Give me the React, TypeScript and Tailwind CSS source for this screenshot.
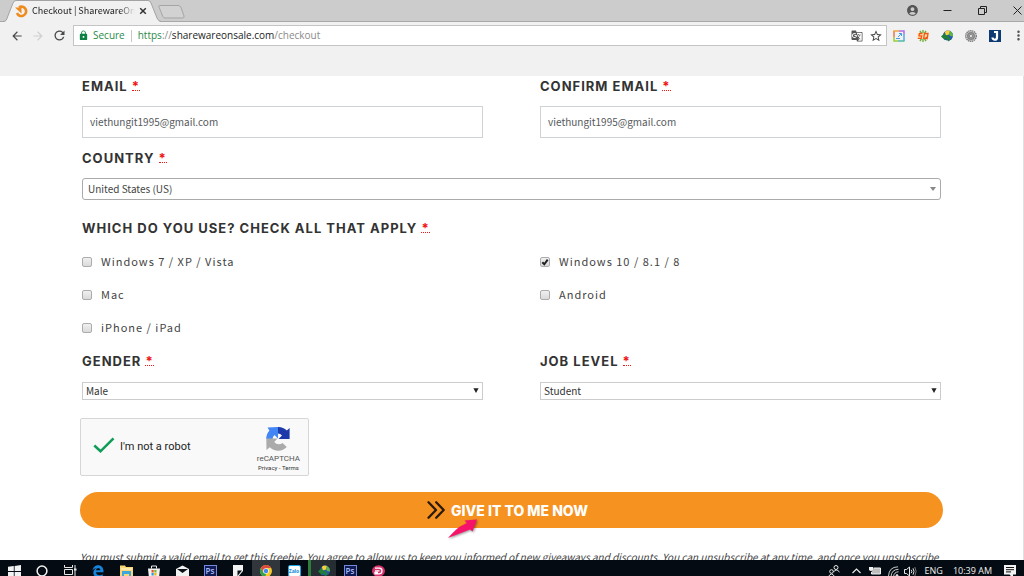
import type { ReactNode } from "react";
import {
  MdAccountCircle,
  MdArrowBack,
  MdArrowForward,
  MdGTranslate,
  MdLock,
  MdMoreVert,
  MdRefresh,
  MdStarBorder,
} from "react-icons/md";

const UI_FONT = "font-['Open_Sans',sans-serif]";
const BODY_FONT = "font-['Noto_Sans_CJK_SC','Noto_Sans',sans-serif]";

/* ---------- browser window ---------- */

function TabStrip() {
  return (
    <div className="relative flex h-[22px] shrink-0 border-b border-[#a8a8a8] bg-[#cccccc]">
      <div className="relative flex h-[22px] w-[168px] items-center pr-[21px] pl-[15px]">
        <svg className="absolute top-0 left-0" width="168" height="22" viewBox="0 0 168 22" aria-hidden="true">
          <path d="M3 22 C6 21.5 6.500 20 7.500 17 L13 3 Q14 .5 16 .5 H148 Q150 .5 151 3 L157 18 Q158.500 21.500 161 22 Z" fill="#f1f1f1" />
          <path d="M3 21.500 C6 21.500 6.500 20 7.500 17 L13 3 Q14 .5 16 .5 H148 Q150 .5 151 3 L157 18 Q158.500 21.500 161 21.500" fill="none" stroke="#a3a3a3" />
        </svg>
        <svg className="relative shrink-0" width="13" height="13" viewBox="0 0 13 13" aria-hidden="true">
          <path d="M4 2.300 A4.700 4.700 0 1 1 2 8" fill="none" stroke="#ef8a1d" strokeWidth="2.600" />
          <path d="M0 2.500 H6.500 V8.500 Z" fill="#ef8a1d" />
        </svg>
        <span className={`${BODY_FONT} relative ml-1 flex-1 overflow-hidden text-[9px] leading-4 whitespace-nowrap text-[#222] [mask-image:linear-gradient(to_right,black_85%,transparent)]`}>
          Checkout | SharewareOnS
        </span>
        <button type="button" aria-label="Close tab" className="relative ml-1 shrink-0">
          <svg width="8" height="8" viewBox="0 0 8 8" aria-hidden="true">
            <path d="M1.200 1.200 L6.800 6.800 M6.800 1.200 L1.200 6.800" stroke="#333" strokeWidth="1.500" />
          </svg>
        </button>
      </div>
      <button type="button" aria-label="New tab" className="-ml-3 self-center pt-0.5">
        <svg width="30" height="14" viewBox="0 0 30 14" aria-hidden="true">
          <path d="M3.500 .5 H22 Q24 .5 24.800 2 L28 11 Q28.600 13 26.500 13 H9 Q7.500 13 6.800 11.500 L3 2 Q2.500 .5 3.500 .5 Z" fill="#d2d2d2" stroke="#a5a5a5" />
        </svg>
      </button>
      <div className="ml-auto flex items-center pr-0.5 text-[#333]">
        <button type="button" aria-label="Profile" className="flex w-[35px] justify-center text-[#555]">
          <MdAccountCircle size={13} />
        </button>
        <button type="button" aria-label="Minimize" className="flex w-[35px] justify-center">
          <svg width="9" height="9" viewBox="0 0 9 9"><path d="M.5 4.500 H8.500" stroke="#222" /></svg>
        </button>
        <button type="button" aria-label="Restore" className="flex w-[35px] justify-center">
          <svg width="9" height="9" viewBox="0 0 9 9" fill="none" stroke="#222">
            <path d="M.5 2.500 H6.500 V8.500 H.5 Z M2.500 2.500 V.5 H8.500 V6.500 H6.500" />
          </svg>
        </button>
        <button type="button" aria-label="Close" className="flex w-[22px] justify-end">
          <svg width="9" height="9" viewBox="0 0 9 9"><path d="M.5 .5 L8.500 8.500 M8.500 .5 L.5 8.500" stroke="#222" /></svg>
        </button>
      </div>
    </div>
  );
}

function IdmGlobe() {
  return (
    <svg width="12" height="12" viewBox="0 0 12 12" aria-hidden="true">
      <circle cx="7" cy="5.600" r="5" fill="#2457b0" />
      <path d="M3.800 2 Q6 -.2 9 1 L8 4.500 L5 5.500 Z" fill="#f6cf3a" />
      <path d="M9 1 Q12.500 3 12 6.500 L9 6 L8 4 Z" fill="#5fb548" />
      <path d="M0 6.500 L4 2.800 V5 Q8.500 5.500 9.500 9.500 L7.500 11.500 Q6.500 8.500 4 8.200 V10.200 Z" fill="#1f7f38" />
    </svg>
  );
}

function Extensions() {
  return (
    <div className="flex items-center gap-3">
      <button type="button" aria-label="Screenshot extension">
        <svg width="12" height="12" viewBox="0 0 12 12" fill="none" strokeWidth="1.500">
          <path d="M1 7 V1" stroke="#e8744f" />
          <path d="M.3 1 H6" stroke="#f0a53c" />
          <path d="M6 1 H11 V4" stroke="#b36be0" />
          <path d="M11 4 V11" stroke="#56a7e8" />
          <path d="M11.500 11 H5" stroke="#4cb8a4" />
          <path d="M5 11 H1 V7" stroke="#9ccc3c" />
          <path d="M3 8.500 H7 M5 7 L8.500 3.500 M6 3.500 H8.500 V6" stroke="#4a9be0" strokeWidth="1" />
        </svg>
      </button>
      <button type="button" aria-label="SQ extension">
        <svg width="12" height="12" viewBox="0 0 12 12" fill="none">
          <path d="M6 0 V12 M3 .8 L9 11.200 M9 .8 L3 11.200" stroke="#6fae3a" strokeWidth="1.400" />
          <path d="M.5 3 H11.500 V9 H.5 Z" fill="#ffe0a8" />
          <path d="M5.500 3.500 H2.500 L2 5.800 H4.700 L4.200 8.300 H.8 M7.500 3.500 H11 L10.200 8.300 H6.700 Z M8.800 7 L10.500 9.300" stroke="#f0581a" strokeWidth="1.300" />
        </svg>
      </button>
      <button type="button" aria-label="IDM extension"><IdmGlobe /></button>
      <button type="button" aria-label="Settings extension">
        <svg width="12" height="12" viewBox="0 0 13 13" fill="none">
          <circle cx="6.500" cy="6.500" r="5.700" stroke="#777" strokeWidth="1.500" strokeDasharray="1.500 .6" />
          <circle cx="6.500" cy="6.500" r="4.800" fill="#a5a5a5" />
          <circle cx="6.500" cy="6.500" r="3.600" stroke="#6d6d6d" strokeWidth=".8" />
          <circle cx="6.500" cy="6.500" r="1.800" fill="#ddd" stroke="#777" strokeWidth=".8" />
        </svg>
      </button>
      <button type="button" aria-label="J extension">
        <svg width="12" height="12" viewBox="0 0 12 12" fill="none">
          <rect width="12" height="12" fill="#0d3a73" />
          <path d="M5 2 H8 V7.500 A2.200 2.200 0 0 1 3.500 7.500" stroke="#fff" strokeWidth="2.200" />
        </svg>
      </button>
    </div>
  );
}

function Toolbar() {
  return (
    <div className={`${UI_FONT} flex h-[54px] shrink-0 items-start bg-[#f1f1f1] pt-[3px] text-[10px]`}>
      <div className="flex h-[21px] items-center gap-[7px] pr-1.5 pl-2.5">
        <button type="button" aria-label="Back" className="text-[#4a4a4a]"><MdArrowBack size={14} /></button>
        <button type="button" aria-label="Forward" className="text-[#d0d0d0]"><MdArrowForward size={14} /></button>
        <button type="button" aria-label="Reload" className="text-[#4a4a4a]"><MdRefresh size={15} /></button>
      </div>
      <div className="flex h-[21px] flex-1 items-center border border-[#c4c4c4] bg-white pr-[3px] pl-1">
        <MdLock size={11} className="text-[#0b8043]" />
        <span className="ml-1 text-[#2a8a4a]">Secure</span>
        <span className="mx-1.5 h-3 w-px bg-[#c8c8c8]" />
        <a href="https://sharewareonsale.com/checkout" className="flex-1 text-[#8a8a8a]">
          <span className="text-[#2a8a4a]">https</span>://<span className="text-[#222]">sharewareonsale.com</span>/checkout
        </a>
        <button type="button" aria-label="Translate this page" className="text-[#555]"><MdGTranslate size={12} /></button>
        <button type="button" aria-label="Bookmark this page" className="ml-1.5 text-[#444]"><MdStarBorder size={14} /></button>
      </div>
      <div className="flex h-[21px] items-center pl-1.5">
        <Extensions />
        <button type="button" aria-label="Menu" className="-mr-0.5 ml-2.5 text-[#555]"><MdMoreVert size={15} /></button>
      </div>
    </div>
  );
}

/* ---------- checkout form ---------- */

function FieldTitle({ htmlFor, children }: { htmlFor?: string; children: ReactNode }) {
  const cls = "block font-['Inter',sans-serif] text-[13px] leading-5 font-bold tracking-[1px] text-[#333] uppercase";
  const body = (
    <>
      {children}{" "}
      <abbr title="required" className="inline-block h-[15px] border-b border-dotted border-[#f01414] align-top text-[#f01414] !no-underline">*</abbr>
    </>
  );
  return htmlFor ? <label htmlFor={htmlFor} className={cls}>{body}</label> : <legend className={cls}>{body}</legend>;
}

function EmailField({ id, title }: { id: string; title: string }) {
  return (
    <div>
      <FieldTitle htmlFor={id}>{title}</FieldTitle>
      <input
        id={id}
        type="email"
        defaultValue="viethungit1995@gmail.com"
        className={`${BODY_FONT} mt-2.5 block h-8 w-full border border-[#cfd3d6] bg-white px-[7px] pb-0.5 text-[10px] text-[#55595c] outline-none`}
      />
    </div>
  );
}

function SmallSelect({ id, title, options }: { id: string; title: string; options: string[] }) {
  return (
    <div>
      <FieldTitle htmlFor={id}>{title}</FieldTitle>
      <div className="relative mt-[11px]">
        <select
          id={id}
          className={`${BODY_FONT} block h-[18px] w-full appearance-none border border-[#cccccc] bg-white px-[3px] text-[10px] leading-4 text-[#333]`}
        >
          {options.map((o) => <option key={o}>{o}</option>)}
        </select>
        <svg className="pointer-events-none absolute top-1.5 right-1" width="6" height="5" viewBox="0 0 6 5" aria-hidden="true">
          <path d="M.4 .3 H5.600 L3 5 Z" fill="#222" />
        </svg>
      </div>
    </div>
  );
}

function Choice({ label, checked }: { label: string; checked?: boolean }) {
  return (
    <label className={`${BODY_FONT} flex h-6 items-center gap-[9px] text-[11px] leading-5 tracking-[1px] text-[#444]`}>
      <span className="relative flex">
        <input
          type="checkbox"
          defaultChecked={checked}
          className="peer size-2.5 appearance-none rounded-[2px] border border-[#acacac] bg-linear-to-b from-[#f0f0f0] to-[#dadada]"
        />
        <svg className="pointer-events-none absolute inset-0 hidden peer-checked:block" width="10" height="10" viewBox="0 0 10 10" aria-hidden="true">
          <path d="M2.300 5.200 L4.300 7.300 L7.700 2.600" fill="none" stroke="#222" strokeWidth="2" />
        </svg>
      </span>
      <span className="pb-0.5">{label}</span>
    </label>
  );
}

function Captcha() {
  return (
    <div className="mt-[18px] flex h-[58px] w-[229px] items-center rounded-[2px] border border-[#d6d6d6] bg-[#f9f9f9] pr-2 pl-3 font-['Roboto',sans-serif]">
      <svg width="22" height="17" viewBox="0 0 22 17" aria-hidden="true" className="-mt-1">
        <path d="M1.300 8.500 L7.500 14.300 L20.500 1.300" fill="none" stroke="#0f9d58" strokeWidth="2.600" />
      </svg>
      <span className="ml-[5px] flex-1 text-[11px] text-[#222]">I'm not a robot</span>
      <div className="flex flex-col items-center pt-1.5 text-[#555]">
        <svg width="24" height="24" viewBox="0 0 24 24" aria-hidden="true">
          <path d="M12 0 A12 12 0 0 1 20.800 3.600 L23.600 1 V12 H12.500 L16 8.500 A6 6 0 0 0 12 6.500 Z" fill="#1c3aa9" />
          <path d="M12 0 V11.500 L8.500 8 A6 6 0 0 0 6.500 12 H.3 A12 12 0 0 1 3.400 3.400 L1.500 .5 Z" fill="#4285f4" />
          <path d="M.3 11.500 H11.500 L8.200 15 A6 6 0 0 0 16.500 16 L20.800 20 A12 12 0 0 1 3.800 20.300 L.5 23 Z" fill="#ababab" />
        </svg>
        <span className="mt-[3px] text-[8px] leading-[9px]">reCAPTCHA</span>
        <span className="text-[6px] leading-[10px] text-[#333]">
          <a href="#privacy">Privacy</a> - <a href="#terms">Terms</a>
        </span>
      </div>
    </div>
  );
}

function CheckoutForm() {
  return (
    <form className="px-20">
      <div className="px-0.5">
        <div className="grid grid-cols-2 gap-x-[57px]">
          <EmailField id="email" title="Email" />
          <EmailField id="confirm-email" title="Confirm Email" />
        </div>

        <div className="mt-2.5">
          <FieldTitle htmlFor="country">Country</FieldTitle>
          <div className="relative mt-2.5">
            <select
              id="country"
              className={`${BODY_FONT} block h-[22px] w-full appearance-none rounded-[3px] border border-[#aaaaaa] bg-white px-[5px] text-[10px] leading-5 text-[#444]`}
            >
              <option>United States (US)</option>
            </select>
            <svg className="pointer-events-none absolute top-[9px] right-[5px]" width="6" height="4" viewBox="0 0 6 4" aria-hidden="true">
              <path d="M0 0 H6 L3 4 Z" fill="#888" />
            </svg>
          </div>
        </div>

        <fieldset className="mt-[18px]">
          <FieldTitle>Which do you use? Check all that apply</FieldTitle>
          <div className="mt-3 grid grid-cols-2 gap-x-[57px] gap-y-[9px]">
            <Choice label="Windows 7 / XP / Vista" />
            <Choice label="Windows 10 / 8.1 / 8" checked />
            <Choice label="Mac" />
            <Choice label="Android" />
            <Choice label="iPhone / iPad" />
          </div>
        </fieldset>

        <div className="mt-[11px] grid grid-cols-2 gap-x-[57px]">
          <SmallSelect id="gender" title="Gender" options={["Male", "Female"]} />
          <SmallSelect id="job-level" title="Job Level" options={["Student", "Manager"]} />
        </div>
      </div>

      <Captcha />

      <button
        type="button"
        className="relative mt-4 flex h-9 w-full items-center justify-center gap-1.5 rounded-full bg-[#f69220] pr-2 font-['Inter',sans-serif] text-[14px] font-extrabold text-white"
      >
        <svg width="18" height="18" viewBox="0 0 18 18" aria-hidden="true">
          <path d="M1.500 1.300 L9 9 L1.500 16.700 M9.200 1.300 L16.700 9 L9.200 16.700" fill="none" stroke="#2b1a08" strokeWidth="2.300" strokeLinecap="round" strokeLinejoin="round" />
        </svg>
        <span className="relative">
          GIVE IT TO ME NOW
          <svg className="absolute top-[18px] -left-1 drop-shadow-[1px_1px_1px_rgba(0,0,0,0.4)]" width="32" height="22" viewBox="0 0 32 22" aria-hidden="true">
            <path d="M30 1.500 L17.500 2.500 L20 5 L14 8 Q10 10 1 20 L23 11.500 L25.500 13.500 Z" fill="#f5146a" />
          </svg>
        </span>
      </button>

      <p className={`${BODY_FONT} mt-[19px] text-[10px] leading-5 whitespace-nowrap text-[#444] italic`}>
        You must submit a valid email to get this freebie. You agree to allow us to keep you informed of new giveaways and discounts. You can unsubscribe at any time, and once you unsubscribe
      </p>
    </form>
  );
}

/* ---------- taskbar ---------- */

function TaskButton({ label, className = "", children }: { label: string; className?: string; children: ReactNode }) {
  return (
    <button type="button" aria-label={label} className={`flex h-full w-7 items-center justify-center ${className}`}>
      {children}
    </button>
  );
}

function Photoshop() {
  return (
    <span className={`${UI_FONT} flex h-3 w-[13px] items-center justify-center border border-[#7389dc] bg-[#101a55] text-[8px] leading-none font-semibold text-[#a9bcf5]`}>
      Ps
    </span>
  );
}

function Taskbar() {
  return (
    <footer className="h-4 shrink-0 overflow-hidden bg-[#040b12]">
      <div className="flex h-[22px] items-center">
        <TaskButton label="Start">
          <svg width="13" height="13" viewBox="0 0 13 13" fill="#f2f2f2">
            <path d="M0 1.800 L5.800 1 V6 H0 Z M6.600 .9 L13 0 V6 H6.600 Z M0 6.900 H5.800 V12 L0 11.200 Z M6.600 6.900 H13 V13 L6.600 12.100 Z" />
          </svg>
        </TaskButton>
        <TaskButton label="Cortana">
          <svg width="12" height="12" viewBox="0 0 12 12"><circle cx="6" cy="6" r="4.900" fill="none" stroke="#f2f2f2" strokeWidth="1.500" /></svg>
        </TaskButton>
        <TaskButton label="Task view">
          <svg width="13" height="13" viewBox="0 0 13 13" fill="none" stroke="#e8e8e8">
            <path d="M.5 0 V2.500 H8.500 V0 M.5 4.500 H8.500 V9.500 H.5 Z M.5 13 V11.500 H8.500 V13 M11 0 V13" />
            <path d="M10 4.500 H12.500" strokeWidth="2" />
          </svg>
        </TaskButton>
        <TaskButton label="Edge">
          <svg width="12" height="13" viewBox="0 0 12 13" fill="none">
            <path d="M.5 5.500 C1.500 1 4 .2 6.200 .2 C9.500 .2 11.800 2.800 11.500 7.300 H4 C4.200 10.500 8 11 10.800 9.300 V12 C6 14 1.300 12 1.300 7.800 C1.300 5.500 2.800 4 4.500 3.200 C3 3.300 1.500 4 .5 5.500 Z M4 5.300 H8.300 C8.200 2.300 4.500 2.300 4 5.300 Z" fill="#1684da" fillRule="evenodd" />
          </svg>
        </TaskButton>
        <TaskButton label="File Explorer">
          <svg width="13" height="12" viewBox="0 0 13 12">
            <path d="M0 .5 H5 L6 2 H13 V12 H0 Z" fill="#f7d673" />
            <path d="M2 6 H11 V12 H9 V9 H4 V12 H2 Z" fill="#3ea6dc" />
            <path d="M1 3 H12 V5 H1 Z" fill="#fbe8a8" />
          </svg>
        </TaskButton>
        <TaskButton label="Store">
          <svg width="12" height="13" viewBox="0 0 12 13">
            <path d="M3.500 3.500 V1 H8.500 V3.500" fill="none" stroke="#eee" />
            <path d="M0 3.500 H12 L11 13 H1 Z" fill="#f2f2f2" />
            <path d="M3.500 5 H5.700 V7.500 H3.500 Z" fill="#e8502d" /><path d="M6.300 5 H8.500 V7.500 H6.300 Z" fill="#76b82a" />
            <path d="M3.500 8 H5.700 V10.500 H3.500 Z" fill="#2a9be0" /><path d="M6.300 8 H8.500 V10.500 H6.300 Z" fill="#f5b800" />
          </svg>
        </TaskButton>
        <TaskButton label="Mail">
          <svg width="13" height="12" viewBox="0 0 13 12">
            <path d="M0 4 L6.500 .5 L13 4 V12 H0 Z" fill="#f2f2f2" />
            <path d="M1 4 H12 L6.500 8 Z" fill="#0a1016" />
          </svg>
        </TaskButton>
        <TaskButton label="Photoshop"><Photoshop /></TaskButton>
        <TaskButton label="Notes">
          <svg width="10" height="12" viewBox="0 0 10 12">
            <path d="M0 0 H10 V6 L5 12 H0 Z" fill="#f2f2f2" /><path d="M4.500 5.500 H9 L4.500 11 Z" fill="#0a1016" />
          </svg>
        </TaskButton>
        <TaskButton label="Chrome" className="bg-[#30363c]">
          <svg width="12" height="12" viewBox="0 0 12 12">
            <circle cx="6" cy="6" r="6" fill="#f6c928" />
            <path d="M.8 3 A6 6 0 0 1 11.200 3 H6 L3.500 7.500 Z" fill="#dd4b3e" />
            <path d="M.8 3 L3.500 7.500 L6 9 L5.300 12 A6 6 0 0 1 .8 3 Z" fill="#32a350" />
            <circle cx="6" cy="6" r="2.800" fill="#fff" /><circle cx="6" cy="6" r="2.200" fill="#4285f4" />
          </svg>
        </TaskButton>
        <TaskButton label="Zalo">
          <span className="flex h-3 w-[13px] items-center justify-center rounded-[2px] border border-[#18a6e8] bg-white text-[5px] leading-none font-bold text-[#1489d8]">Zalo</span>
        </TaskButton>
        <TaskButton label="Internet Download Manager" className="border-l-3 border-[#2f7d3a] bg-[#252c32]"><IdmGlobe /></TaskButton>
        <TaskButton label="Photoshop document"><Photoshop /></TaskButton>
        <TaskButton label="Screen recorder">
          <svg width="13" height="12" viewBox="0 0 13 12">
            <ellipse cx="6.500" cy="6" rx="6.500" ry="5.800" fill="#d6336c" />
            <path d="M3 3.200 H7.500 Q10 3.500 10 6 T7.500 8.800 H3 V7.500 H6 M3 5.800 H7.500" fill="none" stroke="#fff" strokeWidth="1.300" />
          </svg>
        </TaskButton>

        <div className={`${UI_FONT} ml-auto flex items-center pr-2 text-[9px] text-[#f0f0f0]`}>
          <svg width="12" height="12" viewBox="0 0 12 12" fill="none" stroke="#e8e8e8" aria-hidden="true">
            <circle cx="8" cy="2.500" r="2" /><path d="M5.500 7 Q8 3 11.500 7" />
            <circle cx="3.500" cy="6.500" r="1.800" /><path d="M.5 11.500 Q3.500 6.500 6.500 11.500" />
          </svg>
          <svg className="ml-3" width="9" height="6" viewBox="0 0 9 6" fill="none" stroke="#e8e8e8" aria-hidden="true"><path d="M.5 5 L4.500 1 L8.500 5" strokeWidth="1.200" /></svg>
          <svg className="ml-2" width="12" height="10" viewBox="0 0 12 10" aria-hidden="true">
            <path d="M4.500 2 H11.500 V8 H2.500 V6" fill="#bdbdbd" stroke="#f0f0f0" />
            <path d="M0 1 H4 V4 Q2 6 0 4 Z" fill="#f0f0f0" />
          </svg>
          <svg className="ml-[7px]" width="11" height="11" viewBox="0 0 11 11" fill="none" stroke="#c8c8c8" aria-hidden="true">
            <path d="M.5 10 Q1 1 10 .8 M3 10.500 Q3.500 3.500 10.500 3.300 M5.500 10.800 Q6 6 10.500 5.800" />
            <circle cx="9" cy="9.500" r="1" fill="#fff" />
          </svg>
          <svg className="ml-[5px]" width="13" height="11" viewBox="0 0 13 11" fill="none" stroke="#e8e8e8" aria-hidden="true">
            <path d="M.5 3.500 H2.500 L5.500 1 V10 L2.500 7.500 H.5 Z" />
            <path d="M7.200 3.800 Q8.500 5.500 7.200 7.200 M9 2.300 Q11 5.500 9 8.700" /><path d="M10.800 1 Q13.500 5.500 10.800 10" stroke="#777" />
          </svg>
          <span className="ml-2">ENG</span>
          <time className="ml-2.5">10:39 AM</time>
          <svg className="ml-3" width="12" height="13" viewBox="0 0 12 13" aria-hidden="true">
            <path d="M0 0 H12 V9.500 H9 V13 L5.500 9.500 H0 Z" fill="#f2f2f2" />
            <path d="M2 2.500 H10 M2 4.700 H10 M2 6.900 H7" stroke="#111" />
          </svg>
        </div>
      </div>
    </footer>
  );
}

export default function App() {
  return (
    <div className="flex h-screen flex-col overflow-hidden bg-white">
      <header>
        <TabStrip />
        <Toolbar />
      </header>
      <main className="min-h-0 flex-1 overflow-hidden border-r border-[#e0e0e0]">
        <CheckoutForm />
      </main>
      <Taskbar />
    </div>
  );
}
